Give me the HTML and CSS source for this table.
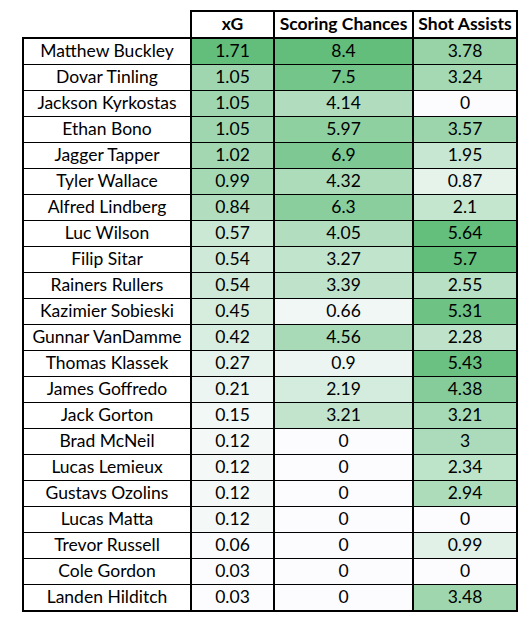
FILE: index.html
```html
<!DOCTYPE html>
<html lang="en">
<head>
  <meta charset="UTF-8">
  <title>xG Table</title>
  <link rel="stylesheet" href="styles.css">
</head>
<body>
  <table class="stats" id="stats">
    <thead>
      <tr>
        <th class="blank"></th>
        <th>xG</th>
        <th>Scoring Chances</th>
        <th>Shot Assists</th>
      </tr>
    </thead>
    <tbody id="rows"></tbody>
  </table>

  <script>
    const players = [
      ['Matthew Buckley', '1.71', '8.4', '3.78'],
      ['Dovar Tinling', '1.05', '7.5', '3.24'],
      ['Jackson Kyrkostas', '1.05', '4.14', '0'],
      ['Ethan Bono', '1.05', '5.97', '3.57'],
      ['Jagger Tapper', '1.02', '6.9', '1.95'],
      ['Tyler Wallace', '0.99', '4.32', '0.87'],
      ['Alfred Lindberg', '0.84', '6.3', '2.1'],
      ['Luc Wilson', '0.57', '4.05', '5.64'],
      ['Filip Sitar', '0.54', '3.27', '5.7'],
      ['Rainers Rullers', '0.54', '3.39', '2.55'],
      ['Kazimier Sobieski', '0.45', '0.66', '5.31'],
      ['Gunnar VanDamme', '0.42', '4.56', '2.28'],
      ['Thomas Klassek', '0.27', '0.9', '5.43'],
      ['James Goffredo', '0.21', '2.19', '4.38'],
      ['Jack Gorton', '0.15', '3.21', '3.21'],
      ['Brad McNeil', '0.12', '0', '3'],
      ['Lucas Lemieux', '0.12', '0', '2.34'],
      ['Gustavs Ozolins', '0.12', '0', '2.94'],
      ['Lucas Matta', '0.12', '0', '0'],
      ['Trevor Russell', '0.06', '0', '0.99'],
      ['Cole Gordon', '0.03', '0', '0'],
      ['Landen Hilditch', '0.03', '0', '3.48']
    ];

    // excel style 2-color scale, white -> green
    const low = [252, 252, 255];
    const high = [99, 190, 123];

    function scale(v, min, max) {
      const t = max === min ? 0 : (v - min) / (max - min);
      const c = low.map((l, i) => Math.round(l + (high[i] - l) * t));
      return 'rgb(' + c.join(',') + ')';
    }

    const body = document.getElementById('rows');
    const ranges = [1, 2, 3].map(col => {
      const vals = players.map(p => parseFloat(p[col]));
      return [Math.min(...vals), Math.max(...vals)];
    });

    players.forEach(p => {
      const tr = document.createElement('tr');
      p.forEach((val, col) => {
        const td = document.createElement('td');
        td.textContent = val;
        if (col === 0) {
          td.className = 'name';
        } else {
          td.style.backgroundColor = scale(parseFloat(val), ranges[col - 1][0], ranges[col - 1][1]);
        }
        tr.appendChild(td);
      });
      body.appendChild(tr);
    });
  </script>
</body>
</html>
```

FILE: styles.css
```css
body {
  margin: 0;
  background-color: #fff;
  font-family: Lato, "Liberation Sans", sans-serif;
  color: #000;
}
.stats {
  border-collapse: collapse;
  margin: 10px 0 0 22px;
  font-size: 17.5px;
  line-height: 1;
}
.stats th,
.stats td {
  padding: 0 0 1px;
  text-align: center;
  height: 24px;
  border-left: 2px solid #000;
  border-right: 2px solid #000;
  border-top: 1px solid #000;
  border-bottom: 1px solid #000;
}
.stats th {
  font-weight: bold;
  border-top: 2px solid #000;
  border-bottom: 2px solid #000;
}
.stats th.blank {
  border: none;
  border-right: 2px solid #000;
  border-bottom: 2px solid #000;
}
.stats tbody tr:last-child td {
  border-bottom: 2px solid #000;
}
.stats th:nth-child(1),
.stats td:nth-child(1) {
  width: 166px;
}
.stats th:nth-child(2),
.stats td:nth-child(2) {
  width: 81px;
}
.stats th:nth-child(3),
.stats td:nth-child(3) {
  width: 137px;
}
.stats th:nth-child(4),
.stats td:nth-child(4) {
  width: 102px;
}
```
